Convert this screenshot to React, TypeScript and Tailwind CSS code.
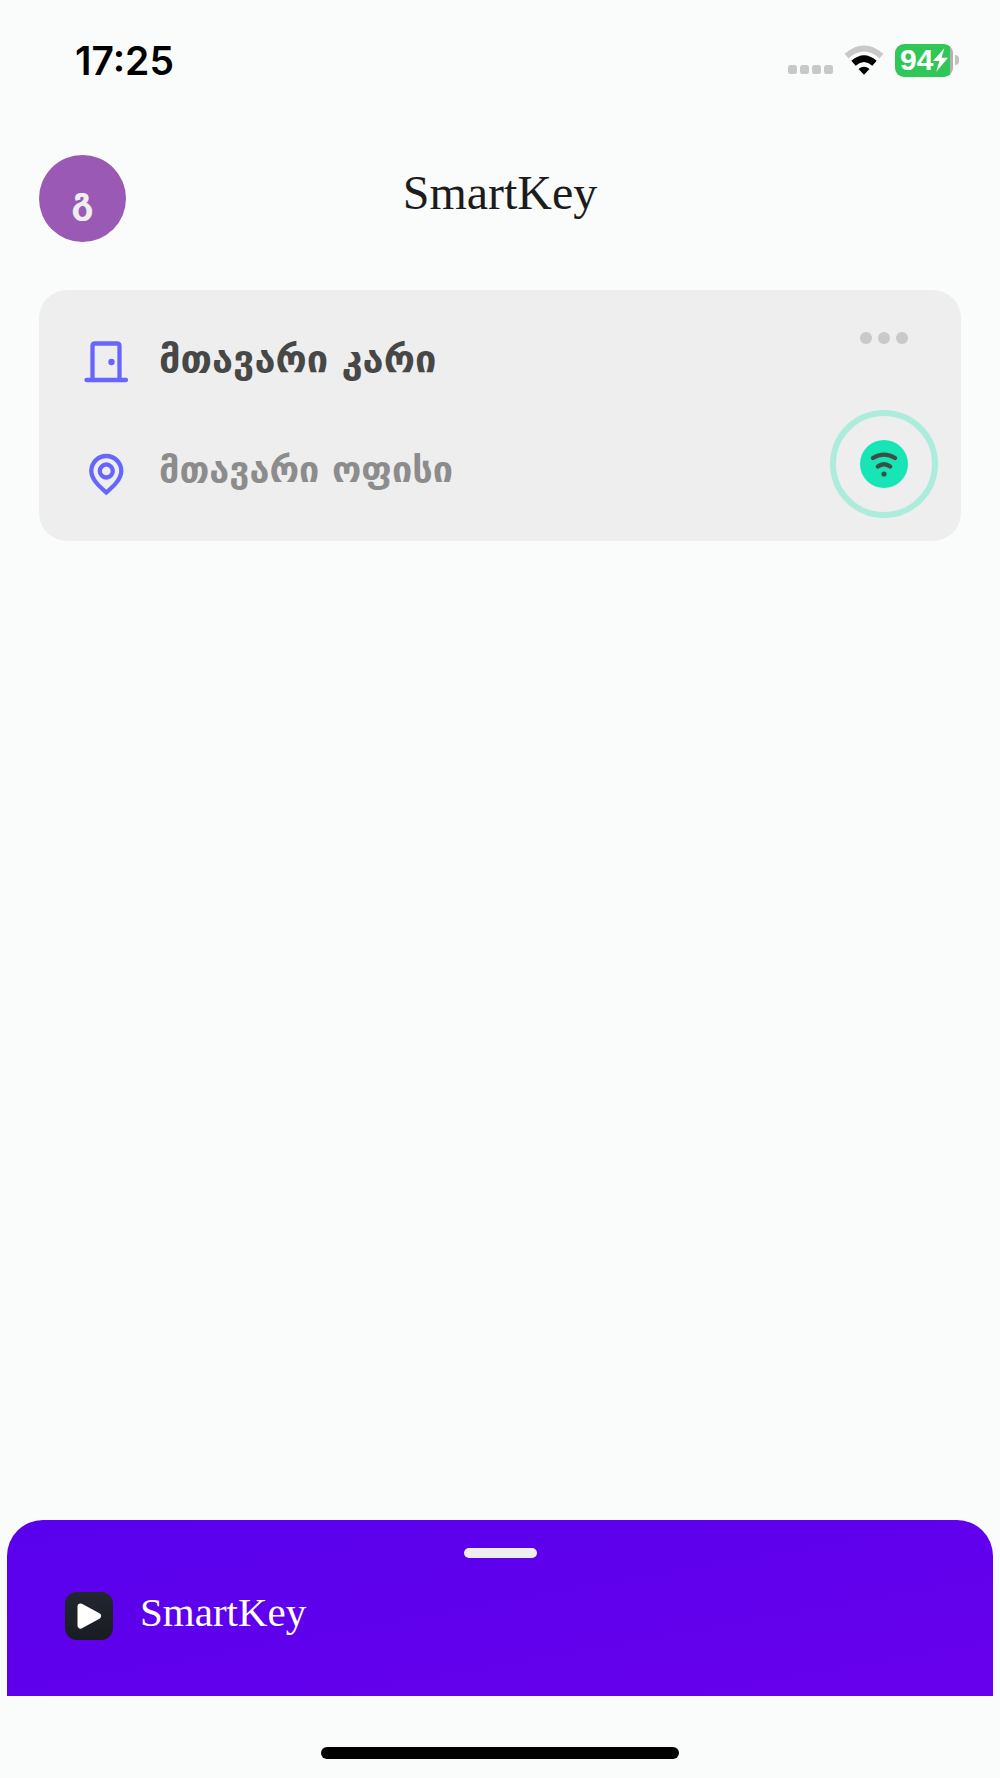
function StatusBar() {
  return (
    <div className="flex h-[108px] items-center justify-between pt-3 pr-[41px] pl-[75px]">
      <time className="text-[39px] leading-none font-semibold text-black">17:25</time>
      <div className="flex items-center gap-[11px]">
        <svg width="96" height="30" viewBox="0 0 96 30" aria-label="Wi-Fi">
          <g fill="#c8c8c8">
            <rect x="0" y="20" width="9" height="9" rx="2.5" />
            <rect x="12" y="20" width="9" height="9" rx="2.5" />
            <rect x="24" y="20" width="9" height="9" rx="2.5" />
            <rect x="36" y="20" width="9" height="9" rx="2.5" />
          </g>
          <path d="M58.5 11 Q76 -4 93.500 11" fill="none" stroke="#c8c8c8" strokeWidth="6" />
          <path d="M65.500 18.200 Q76 9 86.500 18.200" fill="none" stroke="#000" strokeWidth="6.500" />
          <path d="M70.500 24 Q76 19.500 81.500 24 L76 29.800 Z" fill="#000" />
        </svg>
        <div className="flex items-center">
          <div className="flex h-[33px] w-[58px] items-center rounded-[9px] bg-gradient-to-r from-[#30c658] from-94% to-[#b4b0b5] to-94% pl-[5px]">
            <span className="font-['Liberation_Sans',sans-serif] text-[30px] leading-none font-bold text-white">94</span>
            <svg width="15" height="24" viewBox="0 0 14 22" className="shrink-0" aria-label="Charging">
              <path d="M10.500 0 L0 12 H6 L3 22 L14 9 H8 Z" fill="#fff" />
            </svg>
          </div>
          <div className="ml-0.5 h-[10px] w-1 rounded-r-full bg-[#c3c3c3]" />
        </div>
      </div>
    </div>
  );
}

function DoorIcon() {
  return (
    <svg width="46" height="44" viewBox="0 0 46 44" fill="none" stroke="#6666ff" strokeWidth="4.300" aria-hidden="true">
      <path d="M9.500 39 V6 Q9.500 3.500 12 3.500 H34 Q36.500 3.500 36.500 6 V39" />
      <path d="M3.500 40 H43" strokeLinecap="round" />
      <circle cx="28.500" cy="22" r="3.200" fill="#6666ff" stroke="none" />
    </svg>
  );
}

function PinIcon() {
  return (
    <svg width="46" height="44" viewBox="0 0 46 44" fill="none" stroke="#6666ff" strokeWidth="4.300" aria-hidden="true">
      <path d="M23.300 40.500 C17 35 8.300 27.500 8.300 19 A15 15 0 0 1 38.300 19 C38.300 27.500 29.600 35 23.300 40.500 Z" />
      <circle cx="23.300" cy="19" r="6.500" />
    </svg>
  );
}

export default function App() {
  return (
    <div className="flex min-h-screen flex-col bg-[#fafcfb] font-['Inter',sans-serif]">
      <StatusBar />

      <header className="grid grid-cols-[1fr_auto_1fr] items-center px-[39px] pt-[47px]">
        <button type="button" className="flex size-[87px] items-center justify-center rounded-full bg-[#9b59b6] pt-1">
          <span className="font-['DejaVu_Sans',sans-serif] text-[36px] leading-none font-bold text-[#eeeeee]">გ</span>
        </button>
        <h1 className="pb-3 font-['Liberation_Serif',serif] text-[48px] leading-none text-[#1c1c1c]">SmartKey</h1>
      </header>

      <main className="flex-1 px-[39px] pt-12">
        <article className="flex justify-between rounded-[28px] bg-[#eeeeee] pt-[42px] pr-[23px] pb-[23px] pl-[44px]">
          <div className="flex flex-col gap-[68px] pb-[22px]">
            <div className="flex items-start gap-[30px] pt-2">
              <DoorIcon />
              <h2 className="font-['DejaVu_Sans',sans-serif] text-[38px] leading-[38px] font-bold text-[#474747]">მთავარი კარი</h2>
            </div>
            <div className="flex items-start gap-[30px]">
              <PinIcon />
              <p className="font-['DejaVu_Sans',sans-serif] text-[36px] leading-[36px] font-bold text-[#8c8c8c]">მთავარი ოფისი</p>
            </div>
          </div>
          <div className="flex flex-col items-center justify-between">
            <button type="button" aria-label="More options" className="flex gap-1.5">
              <span className="size-3 rounded-full bg-[#c9c9c9]" />
              <span className="size-3 rounded-full bg-[#c9c9c9]" />
              <span className="size-3 rounded-full bg-[#c9c9c9]" />
            </button>
            <button type="button" aria-label="Unlock" className="flex size-[108px] items-center justify-center rounded-full border-[6px] border-[#abecdc]">
              <span className="flex size-12 items-center justify-center rounded-full bg-[#18e5b6]">
                <svg width="30" height="28" viewBox="0 0 30 28" fill="none" stroke="#3f4d48" strokeWidth="4.300" strokeLinecap="round" aria-hidden="true">
                  <path d="M4 8 Q15 1.200 26 8" />
                  <path d="M8.800 16.500 Q15 12 21.200 16.500" />
                  <circle cx="15" cy="24" r="2.600" fill="#3f4d48" stroke="none" />
                </svg>
              </span>
            </button>
          </div>
        </article>
      </main>

      <footer className="px-[7px]">
        <section className="flex h-[176px] flex-col rounded-t-[36px] bg-gradient-to-br from-[#5800ec] to-[#6800ed] px-[58px] pt-7">
          <button type="button" aria-label="Expand panel" className="h-[10px] w-[73px] self-center rounded-full bg-[#eeeeee]" />
          <div className="flex items-center gap-[27px] pt-[34px]">
            <button type="button" aria-label="Play" className="flex size-12 items-center justify-center rounded-xl bg-gradient-to-b from-[#22262f] to-[#191c22]">
              <svg width="26" height="28" viewBox="0 0 26 28" aria-hidden="true">
                <path d="M4.500 4.500 L22 14 L4.500 23.500 Z" fill="#fff" stroke="#fff" strokeWidth="6" strokeLinejoin="round" />
              </svg>
            </button>
            <span className="pb-2 font-['Liberation_Serif',serif] text-[41px] leading-10 text-white">SmartKey</span>
          </div>
        </section>
        <div className="flex h-[82px] items-end justify-center pb-[19px]">
          <div className="h-3 w-[358px] rounded-full bg-black" />
        </div>
      </footer>
    </div>
  );
}
